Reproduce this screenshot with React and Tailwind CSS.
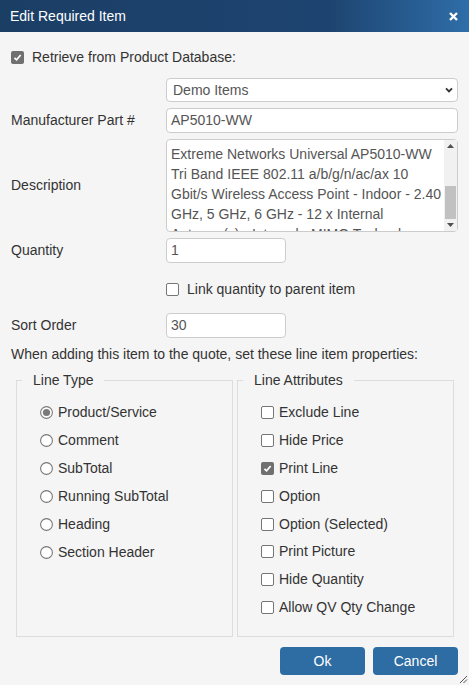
import React from "react";

const lineTypes = [
  "Product/Service",
  "Comment",
  "SubTotal",
  "Running SubTotal",
  "Heading",
  "Section Header",
];

const attributes = [
  { label: "Exclude Line", checked: false },
  { label: "Hide Price", checked: false },
  { label: "Print Line", checked: true },
  { label: "Option", checked: false },
  { label: "Option (Selected)", checked: false },
  { label: "Print Picture", checked: false },
  { label: "Hide Quantity", checked: false },
  { label: "Allow QV Qty Change", checked: false },
];

const descLines = [
  "Extreme Networks Universal AP5010-WW",
  "Tri Band IEEE 802.11 a/b/g/n/ac/ax 10",
  "Gbit/s Wireless Access Point - Indoor - 2.40",
  "GHz, 5 GHz, 6 GHz - 12 x Internal",
  "Antenna(s) - Internal - MIMO Technology -",
];

const Check = ({ checked }) =>
  checked ? (
    <span className="flex h-[13px] w-[13px] shrink-0 items-center justify-center rounded-[2px] bg-[#707070]">
      <svg viewBox="0 0 10 10" className="h-[9px] w-[9px]">
        <path d="M1.6 5.3 4 7.6 8.5 2.3" fill="none" stroke="#fff" strokeWidth="1.9" />
      </svg>
    </span>
  ) : (
    <span className="h-[13px] w-[13px] shrink-0 rounded-[2px] border border-[#767676] bg-white" />
  );

const Radio = ({ checked }) => (
  <svg viewBox="0 0 13 13" className="h-[13px] w-[13px] shrink-0">
    <circle cx="6.5" cy="6.5" r="5.9" fill="#fff" stroke={checked ? "#7a7a7a" : "#767676"} strokeWidth="1.1" />
    {checked && <circle cx="6.5" cy="6.5" r="3.6" fill="#7a7a7a" />}
  </svg>
);

const inputCls =
  "flex items-center rounded-[4px] border border-[#ccc] bg-white pl-[4px] text-[#555]";

export default function App() {
  return (
    <div className="relative h-[685px] w-[469px] overflow-hidden bg-[#f5f5f5] font-['Liberation_Sans',Arial,sans-serif] text-[14px] text-[#333]">
      {/* title bar */}
      <div className="flex h-[32px] items-center justify-between bg-gradient-to-r from-[#1b3e65] via-[#1d4470] via-70% to-[#2f6ea8] pl-[10px] pr-[11px] text-white">
        <span>Edit Required Item</span>
        <svg viewBox="0 0 9 9" className="h-[9px] w-[9px]">
          <path d="M1 1 8 8M8 1 1 8" stroke="#fff" strokeWidth="2.4" />
        </svg>
      </div>

      <div className="px-[11px] pt-[15px]">
        <div className="flex h-[20px] items-center gap-[8px]">
          <Check checked />
          <span>Retrieve from Product Database:</span>
        </div>

        {/* catalog select */}
        <div className="ml-[155px] mt-[11px] flex h-[24px] items-center justify-between rounded-[4px] border border-[#ccc] bg-white pl-[6px] pr-[4px] text-[#555]">
          <span>Demo Items</span>
          <svg viewBox="0 0 8 6" className="h-[6px] w-[8px]">
            <path d="M1 1.3 4 4.4 7 1.3" fill="none" stroke="#333" strokeWidth="1.8" />
          </svg>
        </div>

        <div className="mt-[6px] flex items-center">
          <span className="w-[155px] shrink-0">Manufacturer Part #</span>
          <div className={`${inputCls} h-[25px] flex-1`}>AP5010-WW</div>
        </div>

        <div className="mt-[6px] flex items-center">
          <span className="w-[155px] shrink-0">Description</span>
          <div className="flex h-[93px] flex-1 rounded-[4px] border border-[#ccc] bg-white">
            <div className="flex-1 overflow-hidden pl-[4px] pt-[4px] leading-[20px] text-[#555]">
              {descLines.map((l) => (
                <div key={l} className="whitespace-nowrap">
                  {l}
                </div>
              ))}
            </div>
            {/* scrollbar */}
            <div className="flex w-[13px] flex-col bg-[#f1f1f1]">
              <div className="flex h-[12px] items-center justify-center">
                <svg viewBox="0 0 7 4" className="h-[4px] w-[7px]">
                  <path d="M0 4 3.5 0 7 4Z" fill="#505050" />
                </svg>
              </div>
              <div className="h-[34px]" />
              <div className="mx-[1px] h-[33px] bg-[#c1c1c1]" />
              <div className="flex h-[12px] items-center justify-center">
                <svg viewBox="0 0 7 4" className="h-[4px] w-[7px]">
                  <path d="M0 0 3.5 4 7 0Z" fill="#505050" />
                </svg>
              </div>
            </div>
          </div>
        </div>

        <div className="mt-[6px] flex items-center">
          <span className="w-[155px] shrink-0">Quantity</span>
          <div className={`${inputCls} h-[25px] w-[120px]`}>1</div>
        </div>

        <div className="ml-[155px] mt-[16px] flex h-[20px] items-center gap-[8px]">
          <Check />
          <span>Link quantity to parent item</span>
        </div>

        <div className="mt-[14px] flex items-center">
          <span className="w-[155px] shrink-0">Sort Order</span>
          <div className={`${inputCls} h-[25px] w-[120px]`}>30</div>
        </div>

        <p className="mt-[6px] h-[20px] leading-[20px]">
          When adding this item to the quote, set these line item properties:
        </p>

        {/* property groups */}
        <div className="mt-[6px] flex gap-[4px] pl-[5px]">
          <fieldset className="h-[267px] w-[217px] border border-[#ddd] px-[5px]">
            <legend className="px-[11px] leading-[20px]">Line Type</legend>
            <div className="pl-[18px] pt-[9px]">
              {lineTypes.map((t, i) => (
                <div key={t} className="flex h-[27.9px] items-center gap-[5px]">
                  <Radio checked={i === 0} />
                  <span>{t}</span>
                </div>
              ))}
            </div>
          </fieldset>

          <fieldset className="h-[267px] w-[217px] border border-[#ddd] px-[5px]">
            <legend className="px-[11px] leading-[20px]">Line Attributes</legend>
            <div className="pl-[18px] pt-[9px]">
              {attributes.map((a) => (
                <div key={a.label} className="flex h-[27.8px] items-center gap-[5px]">
                  <Check checked={a.checked} />
                  <span>{a.label}</span>
                </div>
              ))}
            </div>
          </fieldset>
        </div>

        <div className="mt-[10px] flex justify-end gap-[8px] pr-[-1px]">
          <button className="h-[28px] w-[85px] rounded-[4px] bg-[#2e6da4] text-white">Ok</button>
          <button className="h-[28px] w-[85px] rounded-[4px] bg-[#2e6da4] text-white">Cancel</button>
        </div>
      </div>

      {/* resize grip */}
      <svg viewBox="0 0 9 9" className="absolute bottom-[1px] right-[1px] h-[9px] w-[9px]">
        <path d="M1 8 8 1M4.5 8 8 4.5" stroke="#555" strokeWidth="1" />
      </svg>
    </div>
  );
}
